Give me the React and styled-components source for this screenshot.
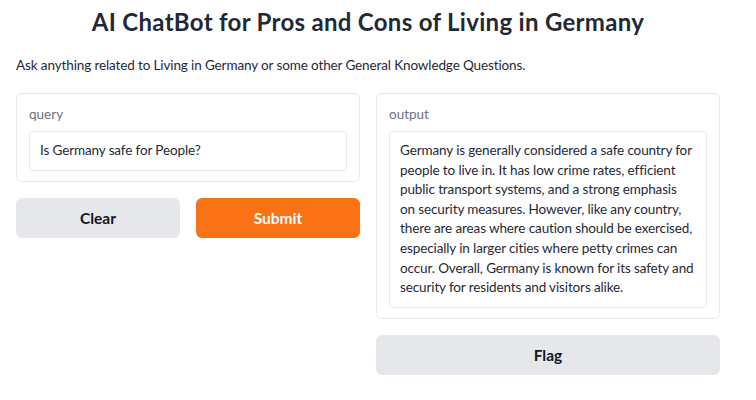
import styled, { createGlobalStyle } from "styled-components";

const GlobalStyle = createGlobalStyle`
  body {
    margin: 0;
    background: #ffffff;
    font-family: Lato, "Noto Sans", sans-serif;
    color: #1f2937;
  }
`;

const Page = styled.div`
  width: 704px;
  margin-left: 16px;
  padding-top: 8px;
`;

const Title = styled.h1`
  margin: 0;
  text-align: center;
  font-size: 24px;
  font-weight: 700;
  letter-spacing: 0.3px;
  line-height: 28px;
  color: #1f2937;
`;

const Description = styled.p`
  margin: 20px 0 0;
  font-size: 13.5px;
  letter-spacing: -0.12px;
  line-height: 18px;
  color: #1f2937;
`;

const Columns = styled.div`
  display: grid;
  grid-template-columns: 1fr 1fr;
  gap: 16px;
  margin-top: 19px;
  align-items: start;
`;

const Column = styled.div`
  display: flex;
  flex-direction: column;
  gap: 16px;
`;

const Panel = styled.div`
  border: 1px solid #e5e7eb;
  border-radius: 6px;
  padding: 12px 12px 10px;
  display: flex;
  flex-direction: column;
  gap: 9px;
`;

const Label = styled.span`
  font-size: 13.5px;
  line-height: 16px;
  color: #6b7280;
`;

const Field = styled.div`
  border: 1px solid #e5e7eb;
  border-radius: 4px;
  padding: 9px 12px 9px 10px;
  font-size: 13.5px;
  letter-spacing: -0.12px;
  line-height: 19.6px;
  color: #1f2937;
`;

const ButtonRow = styled.div`
  display: grid;
  grid-template-columns: 1fr 1fr;
  gap: 16px;
`;

const Button = styled.button`
  height: 40px;
  border: none;
  border-radius: 6px;
  font-family: inherit;
  font-size: 15.5px;
  font-weight: 700;
  background: ${(p) => (p.$primary ? "#f97316" : "#e5e7eb")};
  color: ${(p) => (p.$primary ? "#ffffff" : "#111827")};
  cursor: pointer;
`;

export default function App() {
  return (
    <>
      <GlobalStyle />
      <Page>
        <Title>AI ChatBot for Pros and Cons of Living in Germany</Title>
        <Description>
          Ask anything related to Living in Germany or some other General Knowledge Questions.
        </Description>
        <Columns>
          <Column>
            <Panel>
              <Label>query</Label>
              <Field>Is Germany safe for People?</Field>
            </Panel>
            <ButtonRow>
              <Button>Clear</Button>
              <Button $primary>Submit</Button>
            </ButtonRow>
          </Column>
          <Column>
            <Panel>
              <Label>output</Label>
              <Field>
                Germany is generally considered a safe country for people to live in. It has low
                crime rates, efficient public transport systems, and a strong emphasis on security
                measures. However, like any country, there are areas where caution should be
                exercised, especially in larger cities where petty crimes can occur. Overall,
                Germany is known for its safety and security for residents and visitors alike.
              </Field>
            </Panel>
            <Button>Flag</Button>
          </Column>
        </Columns>
      </Page>
    </>
  );
}
